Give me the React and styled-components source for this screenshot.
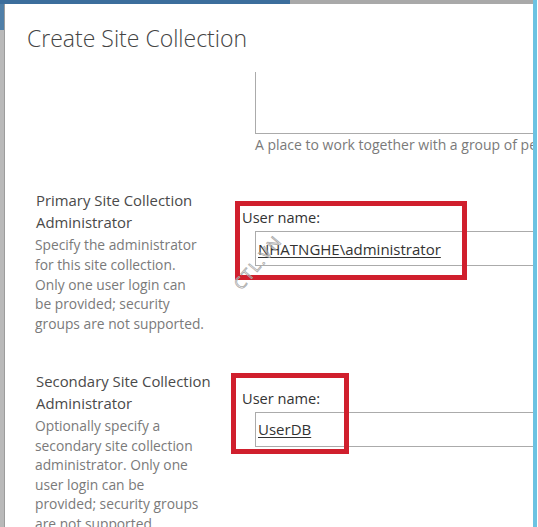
import React from "react";
import styled, { createGlobalStyle } from "styled-components";

const GlobalStyle = createGlobalStyle`
  html, body {
    margin: 0;
    padding: 0;
    background: #ffffff;
    overflow: hidden;
  }
`;

const FONT = `"Open Sans", "Noto Sans", "Liberation Sans", sans-serif`;

/* Window frame: top strip, left edge, dialog, right accent edge */
const Screen = styled.div`
  width: 538px;
  height: 527px;
  overflow: hidden;
  display: grid;
  grid-template-columns: 5px 528px 5px;
  grid-template-rows: 4px 523px;
  background: #ffffff;
`;

const TopStrip = styled.div`
  grid-column: 1 / 3;
  grid-row: 1;
  display: flex;
`;

const StripPart = styled.div`
  height: 4px;
  width: ${(p) => (p.$w ? `${p.$w}px` : "auto")};
  flex: ${(p) => (p.$w ? "none" : "1")};
  background: ${(p) => p.$color};
`;

const LeftEdge = styled.div`
  grid-column: 1;
  grid-row: 2;
  background: linear-gradient(
    to bottom,
    #4f7fa8 0,
    #4f7fa8 26px,
    #b9b9b9 26px,
    #b9b9b9 100%
  );
  border-right: 1px solid #9c9c9c;
  box-sizing: border-box;
`;

const RightEdge = styled.div`
  grid-column: 3;
  grid-row: 1 / 3;
  display: flex;
  &::before {
    content: "";
    width: 4px;
    background: #6cc3e2;
  }
`;

const Dialog = styled.div`
  grid-column: 2;
  grid-row: 2;
  overflow: hidden;
  font-family: ${FONT};
`;

const Header = styled.div`
  height: 68px;
  box-sizing: border-box;
  padding: 19px 0 0 22px;
`;

const Title = styled.h1`
  margin: 0;
  font-size: 23px;
  line-height: 30px;
  font-weight: 300;
  color: #444444;
  white-space: nowrap;
`;

const Section = styled.div`
  display: grid;
  grid-template-columns: 206px 400px;
  padding-left: 31px;
  margin-top: ${(p) => p.$top || 0}px;
`;

const LabelColumn = styled.div`
  display: flex;
  flex-direction: column;
`;

const SectionTitle = styled.div`
  font-size: 14.9px;
  line-height: 22px;
  color: #4a4a4a;
  white-space: nowrap;
`;

const SectionBody = styled.div`
  padding-top: 2px;
  display: flex;
  flex-direction: column;
`;

const SectionText = styled.div`
  font-size: 13.8px;
  line-height: ${(p) => p.$lh || 19.8}px;
  color: #7a7a7a;
  white-space: nowrap;
  margin-left: -1px;
`;

const FieldColumn = styled.div`
  position: relative;
  display: flex;
  flex-direction: column;
  padding-top: ${(p) => p.$pad || 0}px;
`;

const DescriptionBox = styled.div`
  margin-left: 13px;
  height: 61px;
  border-left: 1px solid #ababab;
  border-bottom: 1px solid #ababab;
`;

const Hint = styled.div`
  margin: 1px 0 0 13px;
  font-size: 14px;
  line-height: 20px;
  color: #7a7a7a;
  white-space: nowrap;
`;

const FieldLabel = styled.div`
  font-size: 14.6px;
  line-height: 20px;
  color: #333333;
  white-space: nowrap;
`;

const PeopleInput = styled.div`
  margin: 4px 0 0 13px;
  height: 33px;
  border: 1px solid #ababab;
  border-right: none;
  display: flex;
  align-items: center;
  padding-left: 2px;
`;

const ResolvedName = styled.span`
  font-size: 15px;
  color: #333333;
  text-decoration: underline;
  text-underline-offset: 2px;
  white-space: nowrap;
`;

/* Red annotation frame drawn over a field */
const Highlight = styled.div`
  position: absolute;
  left: ${(p) => p.$x}px;
  top: ${(p) => p.$y}px;
  width: ${(p) => p.$w}px;
  height: ${(p) => p.$h}px;
  border: 5px solid #d01f2d;
  box-sizing: border-box;
  pointer-events: none;
`;

const Watermark = styled.span`
  position: absolute;
  left: -5px;
  top: 88px;
  line-height: 20px;
  font-family: ${FONT};
  font-size: 16px;
  letter-spacing: 2px;
  color: transparent;
  -webkit-text-stroke: 0.8px #a9a9a9;
  transform: rotate(-50deg);
  transform-origin: left center;
  white-space: nowrap;
  pointer-events: none;
`;

export default function App() {
  return (
    <>
      <GlobalStyle />
      <Screen>
        <TopStrip>
          <StripPart $w={290} $color="#3c6e9c" />
          <StripPart $color="#a9a9a9" />
        </TopStrip>
        <LeftEdge />
        <RightEdge />
        <Dialog>
          <Header>
            <Title>Create Site Collection</Title>
          </Header>

          <Section>
            <LabelColumn />
            <FieldColumn>
              <DescriptionBox />
              <Hint>A place to work together with a group of people.</Hint>
            </FieldColumn>
          </Section>

          <Section $top={34}>
            <LabelColumn>
              <SectionTitle>Primary Site Collection</SectionTitle>
              <SectionTitle>Administrator</SectionTitle>
              <SectionBody>
                <SectionText>Specify the administrator</SectionText>
                <SectionText>for this site collection.</SectionText>
                <SectionText>Only one user login can</SectionText>
                <SectionText>be provided; security</SectionText>
                <SectionText>groups are not supported.</SectionText>
              </SectionBody>
            </LabelColumn>
            <FieldColumn $pad={18}>
              <FieldLabel>User name:</FieldLabel>
              <PeopleInput>
                <ResolvedName>NHATNGHE\administrator</ResolvedName>
              </PeopleInput>
              <Highlight $x={-7} $y={12} $w={232} $h={79} />
              <Watermark>CTL.VN</Watermark>
            </FieldColumn>
          </Section>

          <Section $top={36}>
            <LabelColumn>
              <SectionTitle>Secondary Site Collection</SectionTitle>
              <SectionTitle>Administrator</SectionTitle>
              <SectionBody>
                <SectionText $lh={19.6}>Optionally specify a</SectionText>
                <SectionText $lh={19.6}>secondary site collection</SectionText>
                <SectionText $lh={19.6}>administrator. Only one</SectionText>
                <SectionText $lh={19.6}>user login can be</SectionText>
                <SectionText $lh={19.6}>provided; security groups</SectionText>
                <SectionText $lh={19.6}>are not supported.</SectionText>
              </SectionBody>
            </LabelColumn>
            <FieldColumn $pad={18}>
              <FieldLabel>User name:</FieldLabel>
              <PeopleInput>
                <ResolvedName>UserDB</ResolvedName>
              </PeopleInput>
              <Highlight $x={-11} $y={3} $w={118} $h={81} />
            </FieldColumn>
          </Section>
        </Dialog>
      </Screen>
    </>
  );
}
